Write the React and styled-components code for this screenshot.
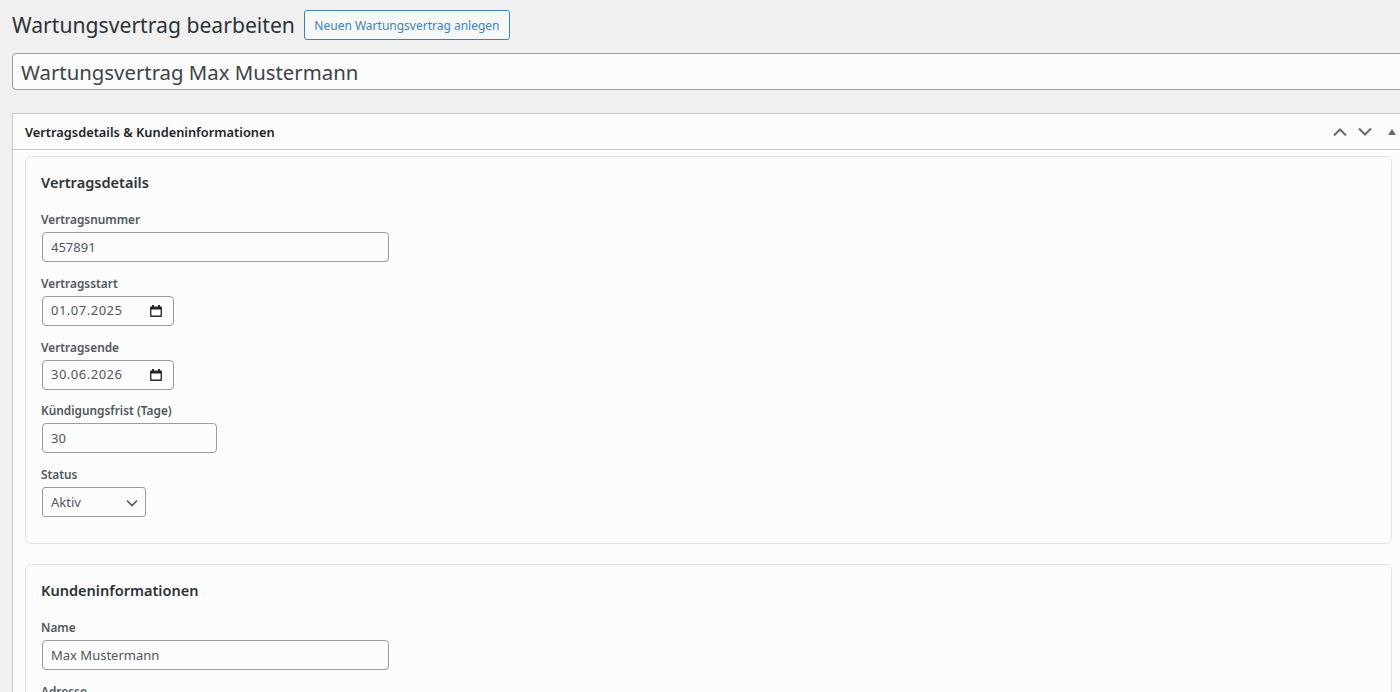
import React from 'react'
import styled, { createGlobalStyle } from 'styled-components'

const GlobalStyle = createGlobalStyle`
html, body {
    margin: 0;
    padding: 0;
    height: 100%;
    overflow: hidden;
    background: #f0f0f0;
}
* {
    box-sizing: border-box;
}
`

function CalendarIcon() {
    return (
        <CalendarSvg viewBox="0 0 14 14" width="14" height="14">
            <path d="M3 1h2v1.5h4V1h2v1.5h1.2c.5 0 .8.4.8.8v8.9c0 .5-.4.8-.8.8H1.8c-.5 0-.8-.4-.8-.8V3.3c0-.5.4-.8.8-.8H3zM2.4 5.6v5.9h9.2V5.6z" fill="#2a2a2a" />
        </CalendarSvg>
    )
}

function Field({ label, value, width, date }) {
    return (
        <FieldRow>
            <Label>{label}</Label>
            <InputWrap $width={width}>
                <TextInput readOnly value={value} $date={date} />
                {date && <CalendarIcon />}
            </InputWrap>
        </FieldRow>
    )
}

function App() {
    return (
        <Page>
            <GlobalStyle />
            <TitleRow>
                <Heading>Wartungsvertrag bearbeiten</Heading>
                <AddButton>Neuen Wartungsvertrag anlegen</AddButton>
            </TitleRow>
            <PostTitle readOnly value="Wartungsvertrag Max Mustermann" />
            <PostBox>
                <PostBoxHeader>
                    <PostBoxTitle>Vertragsdetails &amp; Kundeninformationen</PostBoxTitle>
                    <HandleActions>
                        <svg viewBox="0 0 16 10" width="16" height="10">
                            <path d="M2 8.5l6-6 6 6" fill="none" stroke="#646970" strokeWidth="2" />
                        </svg>
                        <svg viewBox="0 0 16 10" width="16" height="10">
                            <path d="M2 1.5l6 6 6-6" fill="none" stroke="#646970" strokeWidth="2" />
                        </svg>
                        <TriangleIcon viewBox="0 0 10 8" width="10" height="8">
                            <path d="M5 1l4 6H1z" fill="#646970" />
                        </TriangleIcon>
                    </HandleActions>
                </PostBoxHeader>
                <PostBoxInside>
                    <Card>
                        <CardTitle>Vertragsdetails</CardTitle>
                        <Field label="Vertragsnummer" value="457891" width="347px" />
                        <Field label="Vertragsstart" value="01.07.2025" width="132px" date />
                        <Field label="Vertragsende" value="30.06.2026" width="132px" date />
                        <Field label="Kündigungsfrist (Tage)" value="30" width="175px" />
                        <FieldRow>
                            <Label>Status</Label>
                            <SelectWrap>
                                <Select defaultValue="Aktiv">
                                    <option>Aktiv</option>
                                    <option>Inaktiv</option>
                                </Select>
                                <SelectChevron viewBox="0 0 12 8" width="12" height="8">
                                    <path d="M1 1.5l5 5 5-5" fill="none" stroke="#50575e" strokeWidth="1.6" />
                                </SelectChevron>
                            </SelectWrap>
                        </FieldRow>
                    </Card>
                    <Card>
                        <CardTitle>Kundeninformationen</CardTitle>
                        <Field label="Name" value="Max Mustermann" width="347px" />
                        <FieldRow>
                            <Label>Adresse</Label>
                        </FieldRow>
                    </Card>
                </PostBoxInside>
            </PostBox>
        </Page>
    )
}

export default App

const font = `"Noto Sans", "Open Sans", "Liberation Sans", sans-serif`

const Page = styled.div`
width: 1420px;
height: 692px;
overflow: hidden;
padding: 10px 0 0 12px;
font-family: ${font};
color: #1d2327;
`
const TitleRow = styled.div`
display: flex;
align-items: center;
height: 30px;
`
const Heading = styled.h1`
margin: 0 9px 0 0;
font-size: 21.15px;
font-weight: 400;
line-height: 30px;
color: #2c3338;
`
const AddButton = styled.button`
height: 30px;
width: 206px;
padding: 0;
font-family: ${font};
font-size: 12px;
color: #3f83bb;
background: #f6f7f7;
border: 1px solid #3a82bb;
border-radius: 3px;
`
const PostTitle = styled.input`
display: block;
width: 1400px;
height: 37px;
margin-top: 13px;
padding: 0 8px;
font-family: ${font};
font-size: 20.35px;
color: #3c434a;
background: #fcfcfc;
border: 1px solid #9a9ca0;
border-radius: 4px;
outline: none;
`
const PostBox = styled.div`
width: 1393px;
margin-top: 23px;
background: #fcfcfc;
border: 1px solid #c8c9cb;
`
const PostBoxHeader = styled.div`
display: flex;
align-items: center;
justify-content: space-between;
height: 36px;
padding: 0 4px 0 12px;
border-bottom: 1px solid #c8c9cb;
`
const PostBoxTitle = styled.h2`
margin: 0;
font-size: 12.8px;
font-weight: 600;
color: #1d2327;
`
const HandleActions = styled.div`
display: flex;
align-items: center;
gap: 9px;
margin-right: 3px;
`
const TriangleIcon = styled.svg`
margin-left: 5px;
`
const PostBoxInside = styled.div`
padding: 6px 12px 0 12px;
display: flex;
flex-direction: column;
gap: 20px;
`
const Card = styled.section`
padding: 15px 15px 13px 15px;
background: #fcfcfc;
border: 1px solid #e4e4e6;
border-radius: 6px;
min-height: 388px;
`
const CardTitle = styled.h3`
margin: 0 0 19px 0;
font-size: 14.55px;
font-weight: 600;
line-height: 20px;
color: #2c3338;
`
const FieldRow = styled.div`
margin-bottom: 12.75px;
`
const Label = styled.label`
display: block;
margin-bottom: 4px;
font-size: 11.85px;
font-weight: 600;
line-height: 17px;
color: #50575e;
`
const InputWrap = styled.div`
position: relative;
width: ${props => props.$width};
margin-left: 1px;
`
const TextInput = styled.input`
display: block;
width: 100%;
height: 30px;
padding: 0 8px 1px;
font-family: ${font};
font-size: 13px;
letter-spacing: ${props => (props.$date ? '0.5px' : '0')};
color: #50575e;
background: #fcfcfc;
border: 1px solid #9a9ca0;
border-radius: 4px;
outline: none;
`
const CalendarSvg = styled.svg`
position: absolute;
top: 8px;
right: 11px;
`
const SelectWrap = styled.div`
position: relative;
width: 104px;
margin-left: 1px;
`
const Select = styled.select`
display: block;
width: 100%;
height: 30px;
padding: 0 8px 1px;
font-family: ${font};
font-size: 13px;
color: #50575e;
background: #fcfcfc;
border: 1px solid #9a9ca0;
border-radius: 3px;
appearance: none;
outline: none;
`
const SelectChevron = styled.svg`
position: absolute;
top: 12px;
right: 8px;
pointer-events: none;
`
